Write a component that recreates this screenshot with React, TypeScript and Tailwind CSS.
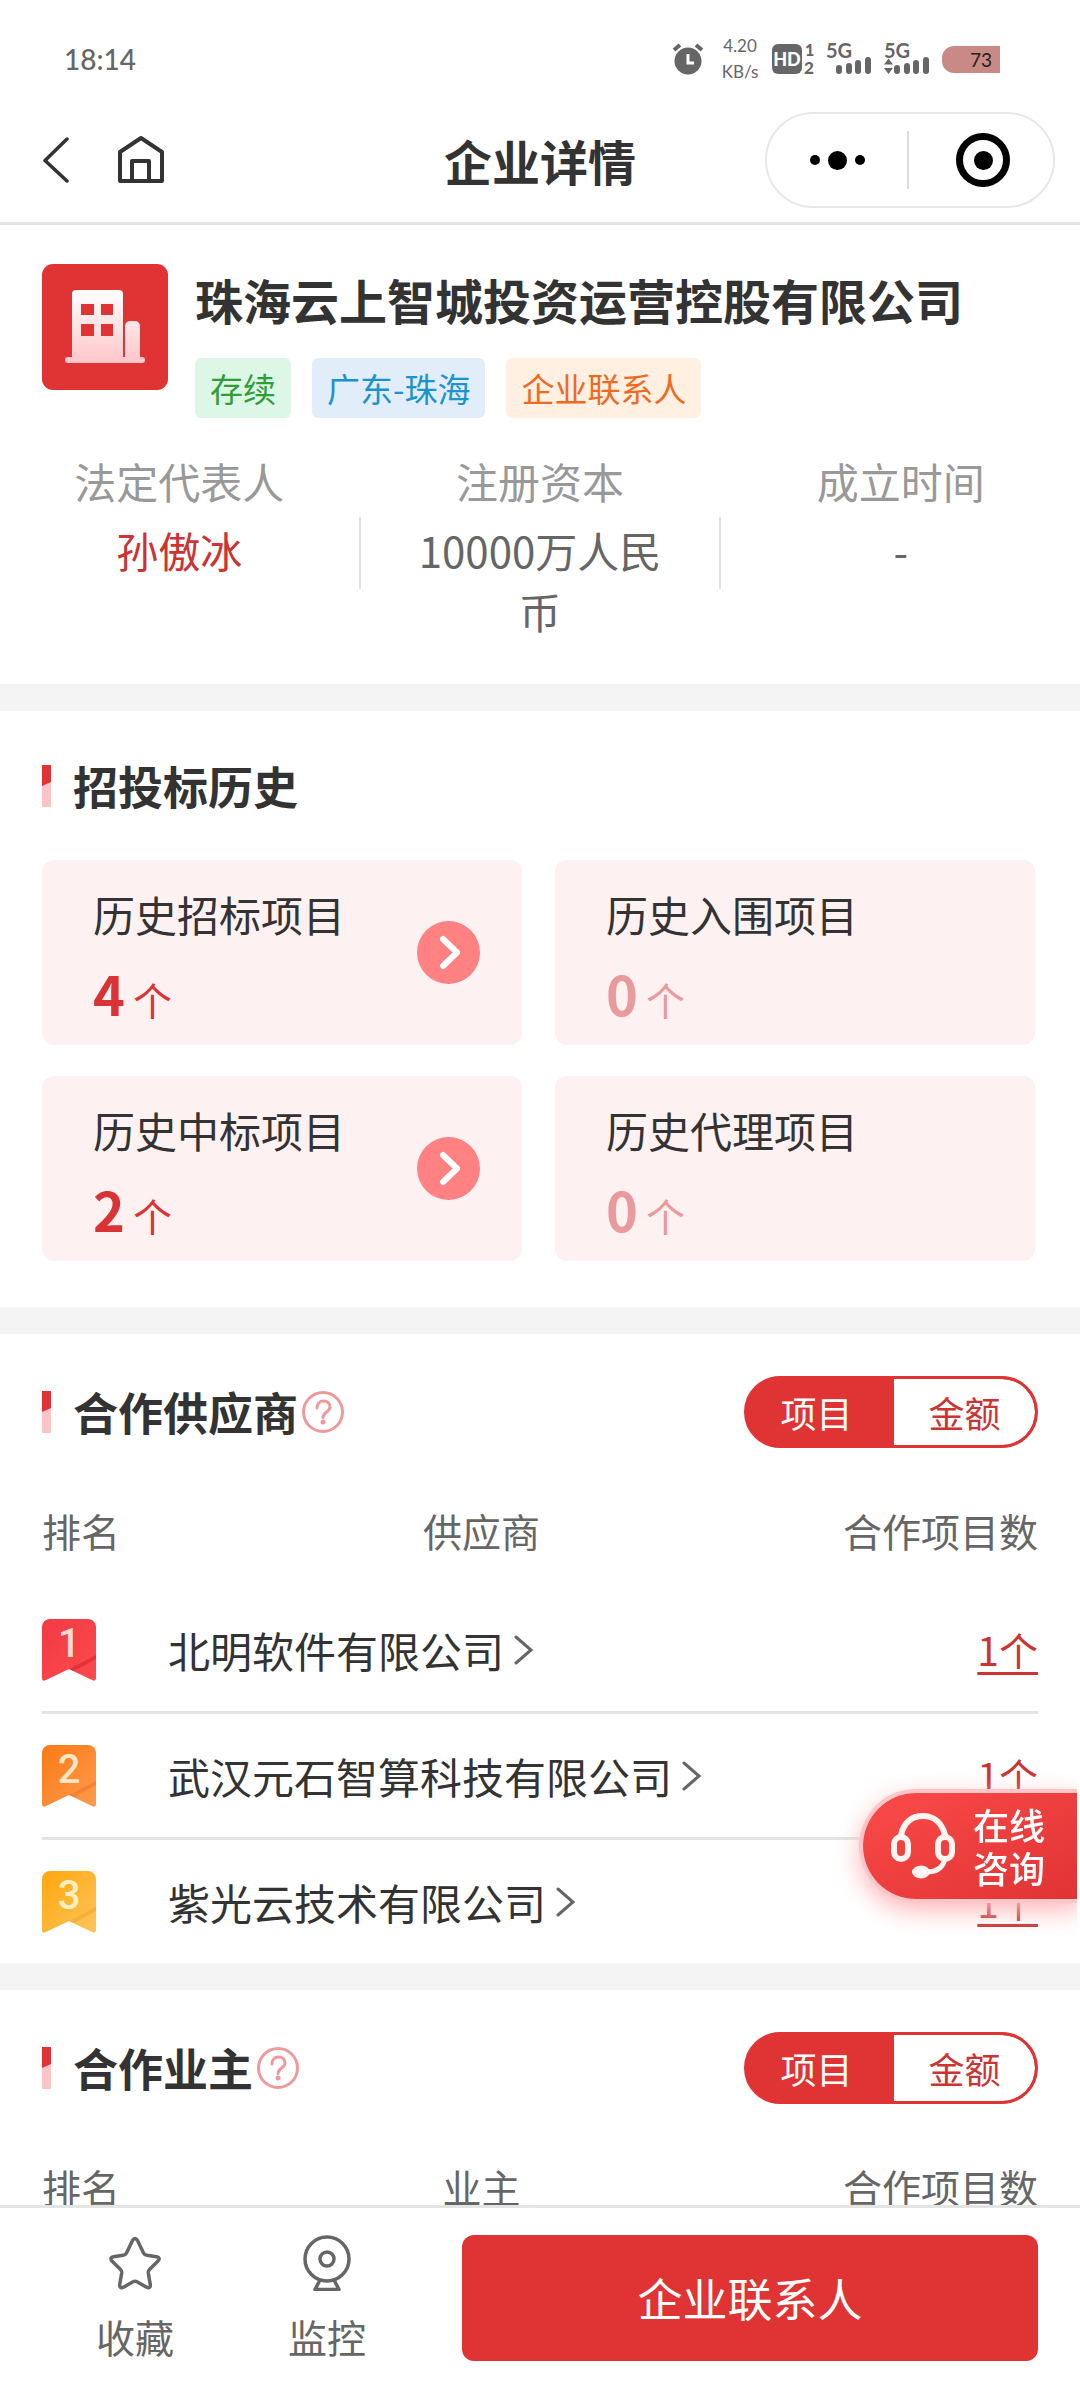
import type { ReactNode } from "react";

const historyItems = [
  { title: "历史招标项目", count: 4 },
  { title: "历史入围项目", count: 0 },
  { title: "历史中标项目", count: 2 },
  { title: "历史代理项目", count: 0 },
];

const suppliers = [
  { rank: 1, name: "北明软件有限公司", count: "1个" },
  { rank: 2, name: "武汉元石智算科技有限公司", count: "1个" },
  { rank: 3, name: "紫光云技术有限公司", count: "1个" },
];

const badgeColors = [
  { from: "#f23a44", to: "#fb4a4c", fold: "#e2323c", text: "#ffd9d6" },
  { from: "#fb7a14", to: "#ff9a4d", fold: "#f58232", text: "#ffe6c4" },
  { from: "#ffa60d", to: "#ffc55a", fold: "#f5b03c", text: "#fff0c4" },
];

const SignalIcon = ({ data }: { data?: boolean }) => (
  <svg width="46" height="32" viewBox="0 0 46 32" fill="#666" className="overflow-visible" aria-hidden="true">
    <text x="0" y="15" fontSize="20" fontWeight="700" fontFamily="Lato, sans-serif">
      5G
    </text>
    <rect x="10" y="22" width="6" height="9" rx="3" />
    <rect x="20" y="20" width="6" height="11" rx="3" />
    <rect x="29" y="17" width="6" height="14" rx="3" />
    <rect x="39" y="14" width="6" height="17" rx="3" />
    {data && <path d="M4.500 15.500l4.500 6H0zM4.500 31l4.500-6H0z" />}
  </svg>
);

const StatusBar = () => (
  <div className="flex h-[102px] items-center justify-between pt-4 pr-20 pl-16 font-[Lato] text-[#666]">
    <span className="text-[28px] leading-8 font-medium">18:14</span>
    <div className="flex items-center gap-3">
      <svg width="32" height="32" viewBox="0 0 32 32" className="mr-1" aria-hidden="true">
        <circle cx="16" cy="18" r="13.500" fill="#666" />
        <path d="M2 7l6-5M30 7l-6-5" stroke="#666" strokeWidth="4" />
        <path d="M16 11v9h6" stroke="#fff" strokeWidth="3" fill="none" />
      </svg>
      <div className="flex w-10 flex-col items-center text-[17px] leading-[26px]">
        <span>4.20</span>
        <span>KB/s</span>
      </div>
      <svg width="42" height="32" viewBox="0 0 42 32" fill="#666" className="overflow-visible" aria-hidden="true">
        <rect y="1" width="30" height="30" rx="6" />
        <text x="15" y="23" fontSize="18" fontWeight="900" fill="#fff" textAnchor="middle" fontFamily="Lato, sans-serif">
          HD
        </text>
        <text x="33" y="13" fontSize="16" fontWeight="900" fontFamily="Lato, sans-serif">
          1
        </text>
        <text x="32" y="31" fontSize="17" fontWeight="900" fontFamily="Lato, sans-serif">
          2
        </text>
      </svg>
      <SignalIcon />
      <SignalIcon data />
      <span className="h-[27px] w-[58px] rounded-l-xl bg-[#c98985] pr-2 text-right text-[19px] leading-[27px] text-[#222]">
        73
      </span>
    </div>
  </div>
);

const NavBar = () => (
  <nav className="grid h-[120px] grid-cols-[1fr_auto_1fr] items-center px-[25px] pb-1">
    <div className="flex items-center gap-12 pl-[15px]">
      <button type="button" aria-label="返回">
        <svg width="30" height="46" viewBox="0 0 30 46" fill="none" stroke="#333" strokeWidth="3.500" strokeLinecap="round" strokeLinejoin="round">
          <path d="M27 2L5 23.500 27 44" />
        </svg>
      </button>
      <button type="button" aria-label="首页">
        <svg width="46" height="50" viewBox="0 0 46 50" fill="none" stroke="#333" strokeWidth="4" strokeLinejoin="round">
          <path d="M2 17L23 3l21 14v29H2z" />
          <path d="M14 46V26h17v20" />
        </svg>
      </button>
    </div>
    <h1 className="text-5xl leading-[70px] font-bold">企业详情</h1>
    <div className="flex h-24 w-[290px] items-center justify-self-end rounded-full border-2 border-[#e8e8e8]">
      <button type="button" aria-label="更多" className="flex flex-1 items-center justify-center gap-2">
        <span className="size-[10px] rounded-full bg-black" />
        <span className="size-[19px] rounded-full bg-black" />
        <span className="size-[10px] rounded-full bg-black" />
      </button>
      <span className="h-[58px] w-[2px] bg-[#dedede]" />
      <button type="button" aria-label="关闭" className="flex flex-1 items-center justify-center pl-1">
        <span className="flex size-[54px] items-center justify-center rounded-full border-[7px] border-black">
          <span className="size-[19px] rounded-full bg-black" />
        </span>
      </button>
    </div>
  </nav>
);

const CompanyLogo = () => (
  <svg width="126" height="126" viewBox="0 0 126 126" className="shrink-0" aria-hidden="true">
    <defs>
      <linearGradient id="building" x1="0" y1="0" x2="0" y2="1">
        <stop offset="0" stopColor="#fff" />
        <stop offset="1" stopColor="#ffc6c9" />
      </linearGradient>
    </defs>
    <rect width="126" height="126" rx="11" fill="#e03333" />
    <path
      fill="url(#building)"
      fillRule="evenodd"
      d="M34 26h43a4 4 0 0 1 4 4v63h2V62a5 5 0 0 1 5-5h5a5 5 0 0 1 5 5v31h2a3 3 0 0 1 0 6H26a3 3 0 0 1 0-6h4V30a4 4 0 0 1 4-4zM39 40v11h13V40zM59 40v11h12V40zM39 60v12h13V60zM59 60v12h12V60z"
    />
  </svg>
);

const Divider = () => <span className="mt-[67px] h-[72px] w-[2px] bg-[#e0e0e0]" />;

const Fact = ({ label, children }: { label: string; children: ReactNode }) => (
  <div className="min-w-0 flex-1 px-10 text-center text-[42px] leading-[61px]">
    <dt className="text-[#999]">{label}</dt>
    <dd className="mt-2 text-[#666]">{children}</dd>
  </div>
);

const CompanySummary = () => (
  <section className="bg-white pt-[39px] pb-[43px]">
    <div className="flex gap-[27px] px-[42px]">
      <CompanyLogo />
      <div>
        <h2 className="text-5xl leading-[70px] font-bold">珠海云上智城投资运营控股有限公司</h2>
        <div className="mt-6 flex gap-[21px] text-[33px] leading-[60px]">
          <span className="rounded-md bg-[#dcf7e6] px-[15px] text-[#2f9e36]">存续</span>
          <span className="rounded-md bg-[#e1eefa] px-[15px] text-[#1c93cc]">广东-珠海</span>
          <span className="rounded-md bg-[#fff0e2] px-[15px] text-[#ee6a22]">企业联系人</span>
        </div>
      </div>
    </div>
    <dl className="mt-8 flex">
      <Fact label="法定代表人">
        <a href="#person" className="text-[#cc3333]">
          孙傲冰
        </a>
      </Fact>
      <Divider />
      <Fact label="注册资本">10000万人民币</Fact>
      <Divider />
      <Fact label="成立时间">-</Fact>
    </dl>
  </section>
);

const SectionTitle = ({ children }: { children: ReactNode }) => (
  <h2 className="flex items-center gap-[22px] text-[45px] leading-[66px] font-bold">
    <svg width="9" height="42" viewBox="0 0 9 42" aria-hidden="true">
      <path d="M0 42V20L9 16v26z" fill="#fbc4c6" />
      <path d="M0 0h9v17L0 21z" fill="#e03333" />
    </svg>
    {children}
  </h2>
);

const HistorySection = () => (
  <section className="bg-white pt-[42px] pr-[45px] pb-[46px] pl-[42px]">
    <SectionTitle>招投标历史</SectionTitle>
    <div className="mt-[41px] grid grid-cols-2 gap-x-[33px] gap-y-[31px]">
      {historyItems.map(({ title, count }) => (
        <button
          type="button"
          key={title}
          disabled={count === 0}
          className="flex items-center justify-between rounded-xl bg-[#fef1f1] pr-[42px] pl-[51px] text-left"
        >
          <span className="pt-6 pb-[15px]">
            <span className="block text-[42px] leading-[60px]">{title}</span>
            <span className={`mt-3 block text-[54px] leading-[74px] ${count ? "text-[#d93336]" : "text-[#e99a9d]"}`}>
              <b className="mr-2">{count}</b>
              <span className="text-[39px] leading-none">个</span>
            </span>
          </span>
          {count > 0 && (
            <svg width="63" height="63" viewBox="0 0 63 63" fill="none" aria-hidden="true">
              <circle cx="31.500" cy="31.500" r="31.500" fill="#ff8182" />
              <path d="M26 18l14 13.500L26 45" stroke="#fff" strokeWidth="6" strokeLinecap="round" strokeLinejoin="round" />
            </svg>
          )}
        </button>
      ))}
    </div>
  </section>
);

const HelpButton = () => (
  <button type="button" aria-label="说明" className="ml-1">
    <svg width="42" height="42" viewBox="0 0 42 42" fill="none" stroke="#f0999b" strokeWidth="3">
      <circle cx="21" cy="21" r="19.500" />
      <path d="M15 17c0-4 2.500-7 6.500-7s6.500 2.500 6.500 6c0 5-7 5-7 10.500" strokeLinecap="round" />
      <circle cx="21" cy="31" r="2.500" fill="#f0999b" stroke="none" />
    </svg>
  </button>
);

const Toggle = () => (
  <div className="flex h-[72px] w-[294px] overflow-hidden rounded-full border-[3px] border-[#e03333] bg-[#e03333] text-4xl">
    <button type="button" aria-pressed="true" className="w-[147px] pr-2 text-white">
      项目
    </button>
    <button type="button" aria-pressed="false" className="flex-1 rounded-r-full bg-white text-[#cc3333]">
      金额
    </button>
  </div>
);

const RankBadge = ({ rank }: { rank: number }) => {
  const color = badgeColors[rank - 1];

  return (
    <svg width="54" height="62" viewBox="0 0 54 62" role="img" aria-label={`第${rank}名`}>
      <defs>
        <linearGradient id={`badge${rank}`} x1="0" y1="0" x2="1" y2="1">
          <stop offset="0" stopColor={color.from} />
          <stop offset="1" stopColor={color.to} />
        </linearGradient>
      </defs>
      <path d="M8 0h38a8 8 0 0 1 8 8v51q0 4-4 2L27 50 4 61q-4 2-4-2V8a8 8 0 0 1 8-8z" fill={`url(#badge${rank})`} />
      <path d="M54 36v4L32 52l-5-2z" fill={color.fold} />
      <text x="27" y="38" fontSize="40" fontWeight="500" fill={color.text} textAnchor="middle" fontFamily="Roboto, sans-serif">
        {rank}
      </text>
    </svg>
  );
};

type Partner = { rank: number; name: string; count: string };

const PartnerSection = ({ title, column, rows }: { title: string; column: string; rows: Partner[] }) => (
  <section className="bg-white px-[42px] pt-[42px]">
    <div className="flex items-center justify-between">
      <div className="flex items-center">
        <SectionTitle>{title}</SectionTitle>
        <HelpButton />
      </div>
      <Toggle />
    </div>
    <table className="mt-6 w-full table-fixed border-separate border-spacing-0">
      <thead className="text-[39px] text-[#666]">
        <tr className="h-[116px]">
          <th className="w-[126px] p-0 text-left font-normal">排名</th>
          <th className="p-0 text-center font-normal">{column}</th>
          <th className="w-[243px] p-0 text-right font-normal">合作项目数</th>
        </tr>
      </thead>
      <tbody>
        {rows.map((row) => (
          <tr
            key={row.rank}
            className="h-[126px] last:h-[123px] [&>td]:border-b-[3px] [&>td]:border-[#e4e4e4] [&>td]:p-0 last:[&>td]:border-b-0"
          >
            <td>
              <RankBadge rank={row.rank} />
            </td>
            <td className="text-[42px] whitespace-nowrap">
              <a href="#company" className="flex items-center gap-[10px]">
                {row.name}
                <svg width="20" height="30" viewBox="0 0 20 30" fill="none" stroke="#666" strokeWidth="3" strokeLinecap="round" aria-hidden="true">
                  <path d="M2 2l15 13L2 28" />
                </svg>
              </a>
            </td>
            <td className="text-right text-[39px] text-[#cc3333]">
              <a href="#projects" className="underline decoration-[3px] underline-offset-[6px]">
                {row.count}
              </a>
            </td>
          </tr>
        ))}
      </tbody>
    </table>
  </section>
);

const SupportButton = () => (
  <button
    type="button"
    className="absolute right-[3px] bottom-[306px] flex h-[106px] w-[214px] items-center gap-4 rounded-l-full bg-linear-to-br from-[#fb4a4a] to-[#e03333] pl-[26px] text-white shadow-[0_0_0_4px_#fcc5c8,0_8px_24px_4px_#ffb8bc] [clip-path:inset(-40px_0_-40px_-40px)]"
  >
    <svg width="68" height="70" viewBox="0 0 68 70" fill="none" stroke="#fff5f0" strokeWidth="6" strokeLinecap="round" aria-hidden="true">
      <path d="M12 24C15 11 23 5 34 5s19 7 22 19" />
      <rect x="5" y="26" width="14" height="22" rx="7" />
      <rect x="49" y="26" width="14" height="22" rx="7" />
      <path d="M55 51c-3 7-9 10-17 10" strokeWidth="5" />
      <ellipse cx="32" cy="61" rx="9" ry="6.500" fill="#fff5f0" stroke="none" />
    </svg>
    <span className="text-4xl leading-[43px] font-medium">
      在线
      <br />
      咨询
    </span>
  </button>
);

const BottomBar = () => (
  <footer className="flex items-start border-t-[3px] border-[#e4e4e4] bg-white pt-[27px] pr-[42px] pb-[23px] pl-[39px] text-[39px] leading-[58px] text-[#666]">
    <button type="button" className="flex w-48 flex-col items-center gap-4">
      <svg width="54" height="56" viewBox="0 0 54 56" fill="none" stroke="#666" strokeWidth="3.500" strokeLinejoin="round" aria-hidden="true">
        <path d="M24.500 5.500q2.500-4 5 0l6 12.500q1 2 3.500 2.300l9.500 1.400q4.500 1 1.300 4.600l-8.300 8.200q-1.500 1.500-1.200 3.500l2 11.500q.3 4.500-3.800 2.700L29 46.800q-2-1-4 0l-9.500 5.400q-4.100 1.800-3.800-2.700l2-11.500q.3-2-1.200-3.500l-8.300-8.200q-3.200-3.600 1.300-4.600l9.500-1.400q2.500-.300 3.500-2.300z" />
      </svg>
      收藏
    </button>
    <button type="button" className="flex w-48 flex-col items-center gap-4">
      <svg width="54" height="56" viewBox="0 0 54 56" fill="none" stroke="#666" strokeWidth="3.500" strokeLinejoin="round" aria-hidden="true">
        <circle cx="27" cy="24" r="22" />
        <circle cx="27" cy="24" r="7" />
        <path d="M20 45l-5 9.500h24L34 45" />
      </svg>
      监控
    </button>
    <button type="button" className="ml-[39px] h-[126px] flex-1 rounded-xl bg-[#e03333] text-[45px] text-white">
      企业联系人
    </button>
  </footer>
);

export default function App() {
  return (
    <div className="flex h-screen flex-col bg-white font-['Noto_Sans_CJK_SC',sans-serif] text-[#333]">
      <header className="border-b-[3px] border-[#e4e4e4]">
        <StatusBar />
        <NavBar />
      </header>

      <div className="relative flex min-h-0 flex-1 flex-col">
        <main className="flex flex-1 flex-col gap-[27px] overflow-y-auto bg-[#f4f4f4] [scrollbar-width:none]">
          <CompanySummary />
          <HistorySection />
          <PartnerSection title="合作供应商" column="供应商" rows={suppliers} />
          <PartnerSection title="合作业主" column="业主" rows={[]} />
        </main>
        <SupportButton />
      </div>

      <BottomBar />
    </div>
  );
}
